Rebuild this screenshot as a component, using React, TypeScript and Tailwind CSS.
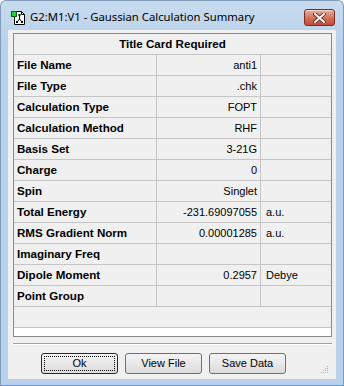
import React from 'react';

const ROWS: { label: string; value: string; unit?: string }[] = [
  { label: 'File Name', value: 'anti1' },
  { label: 'File Type', value: '.chk' },
  { label: 'Calculation Type', value: 'FOPT' },
  { label: 'Calculation Method', value: 'RHF' },
  { label: 'Basis Set', value: '3-21G' },
  { label: 'Charge', value: '0' },
  { label: 'Spin', value: 'Singlet' },
  { label: 'Total Energy', value: '-231.69097055', unit: 'a.u.' },
  { label: 'RMS Gradient Norm', value: '0.00001285', unit: 'a.u.' },
  { label: 'Imaginary Freq', value: '' },
  { label: 'Dipole Moment', value: '0.2957', unit: 'Debye' },
  { label: 'Point Group', value: '' },
];

function AppIcon() {
  return (
    <svg width="15" height="15" viewBox="0 0 15 15" className="shrink-0">
      <path d="M3.5 1.5 H10.5 L13.5 4.5 V14.5 H3.5 Z" fill="#fff" stroke="#000" />
      <path d="M10.5 1.5 V4.5 H13.5" fill="none" stroke="#000" />
      <rect x="0.5" y="1.5" width="5" height="5" fill="#22d33a" stroke="#0a5a14" />
      <path d="M8.5 5 V9 M8.5 9 L6 12 M8.5 9 L11 12" stroke="#000" strokeWidth="1" fill="none" />
      <rect x="7.5" y="4" width="2" height="2" fill="#000" />
      <rect x="5" y="11" width="2" height="2" fill="#000" />
      <rect x="10" y="11" width="2" height="2" fill="#000" />
    </svg>
  );
}

function CloseButton() {
  return (
    <div className="flex h-[17px] w-[31px] items-center justify-center rounded-[3px] border border-[#7b2a22] bg-gradient-to-b from-[#eab0a2] via-[#d5735f] to-[#c14a33] shadow-[inset_0_1px_0_rgba(255,255,255,0.5)]">
      <svg width="13" height="10" viewBox="0 0 13 10">
        <path d="M2 1 L11 9 M11 1 L2 9" stroke="#5a2018" strokeWidth="3.6" strokeLinecap="square" />
        <path d="M2 1 L11 9 M11 1 L2 9" stroke="#fff" strokeWidth="2" strokeLinecap="square" />
      </svg>
    </div>
  );
}

function WinButton({ label, isDefault }: { label: string; isDefault?: boolean }) {
  return (
    <button
      type="button"
      className={
        isDefault
          ? 'flex h-[21px] w-[77px] items-center justify-center rounded-[3px] border border-[#2a2a2a] bg-gradient-to-b from-[#f4f4f4] to-[#dcdcdc] p-[2px] text-[11px] text-black'
          : 'flex h-[21px] w-[77px] items-center justify-center rounded-[3px] border border-[#707070] bg-gradient-to-b from-[#f4f4f4] to-[#dcdcdc] text-[11px] text-black'
      }
    >
      {isDefault ? (
        <span className="flex h-full w-full items-center justify-center border border-dotted border-black">{label}</span>
      ) : (
        label
      )}
    </button>
  );
}

export default function App() {
  return (
    <div
      className="flex h-[386px] w-[344px] flex-col rounded-t-[6px] border border-[#7f9dbb] border-b-[#44a4d6] bg-gradient-to-b from-[#c9dcf0] to-[#b9d1ea] to-[40px] text-black"
      style={{ fontFamily: '"Liberation Sans", Arial, sans-serif' }}
    >
      <div className="flex h-[29px] shrink-0 items-center pl-[10px] pr-[8px] pt-[4px]">
        <AppIcon />
        <span className="ml-[4px] flex-1 text-[11.3px]" style={{ fontFamily: '"Noto Sans", sans-serif' }}>
          G2:M1:V1 - Gaussian Calculation Summary
        </span>
        <CloseButton />
      </div>

      <div className="mx-[7px] flex h-[349px] flex-col bg-[#f0f0f0] pl-[5px] pr-[4px] pt-[3px]">
        <div className="flex h-[304px] w-[319px] flex-col border border-[#8a8a8a] bg-white">
          <div className="flex h-[21px] shrink-0 items-center justify-center border-b border-[#c5c5c5] bg-[#f0f0f0] text-[11.6px] font-bold">
            Title Card Required
          </div>
          {ROWS.map((row) => (
            <div key={row.label} className="flex h-[21px] shrink-0 border-b border-[#c5c5c5] bg-[#f0f0f0] text-[11px]">
              <div className="flex w-[143px] items-center border-r border-[#c5c5c5] pl-[3px] text-[11.6px] font-bold">
                {row.label}
              </div>
              <div className="flex w-[104px] items-center justify-end border-r border-[#c5c5c5] pr-[3px]">{row.value}</div>
              <div className="flex flex-1 items-center pl-[5px]">{row.unit}</div>
            </div>
          ))}
          <div className="h-[21px] shrink-0 border-b border-[#c5c5c5] bg-[#f0f0f0]" />
          <div className="flex-1 bg-white" />
        </div>

        <div className="mt-[6px] h-[2px] w-[319px] border-t border-[#a0a0a0] border-b border-b-white" />

        <div className="relative flex flex-1 items-start gap-[7px] pl-[28px] pt-[8px]">
          <WinButton label="Ok" isDefault />
          <WinButton label="View File" />
          <WinButton label="Save Data" />
          <svg className="absolute bottom-[5px] right-[3px]" width="8" height="8" viewBox="0 0 8 8">
            <rect x="6" y="0" width="1" height="1" fill="#b0b0b0" />
            <rect x="4" y="2" width="1" height="1" fill="#b0b0b0" />
            <rect x="6" y="2" width="1" height="1" fill="#b0b0b0" />
            <rect x="2" y="4" width="1" height="1" fill="#b0b0b0" />
            <rect x="4" y="4" width="1" height="1" fill="#b0b0b0" />
            <rect x="6" y="4" width="1" height="1" fill="#b0b0b0" />
            <rect x="0" y="6" width="1" height="1" fill="#b0b0b0" />
            <rect x="2" y="6" width="1" height="1" fill="#b0b0b0" />
            <rect x="4" y="6" width="1" height="1" fill="#b0b0b0" />
            <rect x="6" y="6" width="1" height="1" fill="#b0b0b0" />
          </svg>
        </div>
      </div>
    </div>
  );
}
